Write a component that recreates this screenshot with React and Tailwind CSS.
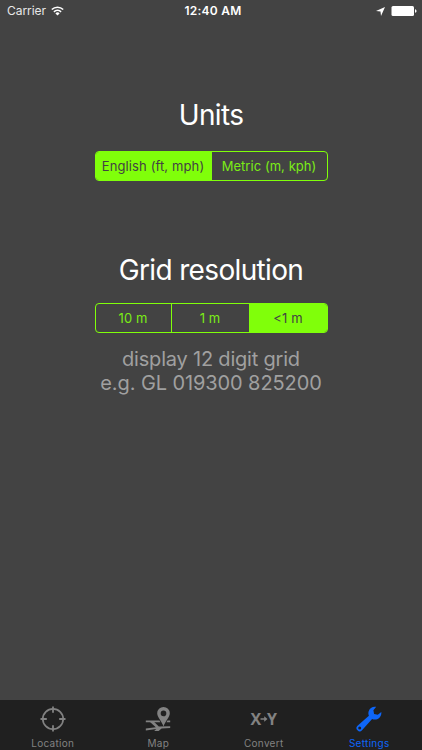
import React, { useState } from 'react';

const UNITS = [
  { id: 'english', label: 'English (ft, mph)', width: 'w-[115px]', tracking: 'tracking-[0.12px]' },
  { id: 'metric', label: 'Metric (m, kph)', width: 'w-[116px]', tracking: 'tracking-[0.05px]' },
];

const RESOLUTIONS = [
  { id: '10m', label: '10 m', width: 'w-[75px]' },
  { id: '1m', label: '1 m', width: 'w-[78px]' },
  { id: 'sub', label: '<1 m', width: 'w-[78px]' },
];

const LocationIcon = () => (
  <svg width="26" height="26" viewBox="0 0 26 26" fill="none" stroke="currentColor">
    <circle cx="13" cy="13" r="10.2" strokeWidth="1.7" />
    <path d="M13 0.5v6.3M13 19.2v6.3M0.5 13h6.3M19.2 13h6.3" strokeWidth="1.8" />
  </svg>
);

const MapIcon = () => (
  <svg width="26" height="26" viewBox="0 0 26 26" fill="currentColor">
    <path
      fillRule="evenodd"
      d="M18.5 1a6.3 6.3 0 0 0-6.3 6.3c0 4 4.5 7.7 6.3 13.2 1.8-5.500 6.300-9.200 6.300-13.200A6.300 6.300 0 0 0 18.500 1zm0 3.600a2.800 2.800 0 1 1 0 5.600 2.800 2.800 0 0 1 0-5.600z"
    />
    <path d="M0.800 14.400h13.600l1 1.800H0.800zM22.400 14.400h2.800v1.800h-3.800z" />
    <path d="M5 16h4.200l4.600 4.600 11.400-.4v1.900l-8.600.5-3 2.400H9.200l2-1.900-10.400 1.400v-1.900l10-1.300z" />
  </svg>
);

const ConvertIcon = () => (
  <span className="flex h-[26px] items-center pb-px font-['Open_Sans',sans-serif] text-[16px] font-bold leading-none">
    <span>X</span>
    <svg className="-mx-px" width="8" height="8" viewBox="0 0 8 8" fill="currentColor">
      <path d="M0.500 3.200h3.700V1.200L7.500 4 4.200 6.800V4.800H0.500z" />
    </svg>
    <span>Y</span>
  </span>
);

const SettingsIcon = () => (
  <svg width="26" height="26" viewBox="0 0 26 26" fill="currentColor">
    <path
      fillRule="evenodd"
      d="M20.2 0.800l-2.800 3.400.7 3.700 3.700.9 3.500-2.700c.4 3.500-1.900 6.700-5.200 7.300-1.500.3-2.800.1-4-.4L6 24.200a3.100 3.100 0 0 1-4.500 0 3.100 3.100 0 0 1 0-4.500L12.900 9.700c-.6-1.300-.7-2.800-.3-4.300.9-3.300 4.200-5.300 7.600-4.600zM3.700 20.500a1.500 1.500 0 1 0 0 3 1.500 1.500 0 0 0 0-3z"
    />
  </svg>
);

const TABS = [
  { id: 'location', label: 'Location', icon: LocationIcon },
  { id: 'map', label: 'Map', icon: MapIcon },
  { id: 'convert', label: 'Convert', icon: ConvertIcon },
  { id: 'settings', label: 'Settings', icon: SettingsIcon },
];

const StatusBar = () => (
  <header className="grid h-[22px] grid-cols-3 items-center pl-[7px] pr-[5px] text-[12px] leading-none text-white">
    <div className="flex items-center gap-[5px]">
      <span className="tracking-[-0.05px] text-[#e8e8e8]">Carrier</span>
      <svg width="13" height="10" viewBox="0 0 13 10" fill="none" stroke="currentColor" strokeWidth="1.6">
        <path d="M0.8 3.5a8.2 8.2 0 0 1 11.4 0M2.9 5.8a5.2 5.2 0 0 1 7.2 0" />
        <path d="M6.5 9.5L4.4 7.4a3 3 0 0 1 4.2 0z" fill="currentColor" stroke="none" />
      </svg>
    </div>
    <div className="pl-[2px] text-center font-semibold tracking-[0.25px]">12:40 AM</div>
    <div className="flex items-center justify-end">
      <svg className="mr-[6px]" width="9" height="9" viewBox="0 0 9 9" fill="currentColor">
        <path d="M9 0L5 9 4.5 4.5 0 4z" />
      </svg>
      <svg width="26" height="10" viewBox="0 0 26 10" fill="currentColor">
        <rect x="0.5" y="0" width="22.5" height="10" rx="1.5" />
        <path d="M24 3.2c1 .2 1.5.9 1.5 1.8S25 6.6 24 6.8z" />
      </svg>
    </div>
  </header>
);

const SegmentedControl = ({ options, value, onChange }) => (
  <div className="flex h-[30px] w-[233px] overflow-hidden rounded-[4px] border border-[#80ff0a]">
    {options.map((option, idx) => (
      <button
        key={option.id}
        onClick={() => onChange(option.id)}
        className={`${option.width} ${option.tracking || 'tracking-[0.1px]'} shrink-0 whitespace-nowrap text-center text-[13px] leading-none ${
          idx > 0 ? 'border-l border-[#80ff0a]' : ''
        } ${value === option.id ? 'bg-[#80ff0a] text-[#434343]' : 'text-[#7bec16]'}`}
      >
        {option.label}
      </button>
    ))}
  </div>
);

const App = () => {
  const [units, setUnits] = useState('english');
  const [resolution, setResolution] = useState('sub');
  const [tab, setTab] = useState('settings');

  return (
    <div className="flex h-[750px] w-[422px] flex-col overflow-hidden bg-[#434343] font-[Inter,sans-serif]">
      <StatusBar />

      <main className="flex flex-1 flex-col items-center">
        {/* Units */}
        <h2 className="mt-[76px] text-[28px] leading-[34px] tracking-[-0.65px] text-white">Units</h2>
        <div className="mt-[19px]">
          <SegmentedControl options={UNITS} value={units} onChange={setUnits} />
        </div>

        {/* Grid resolution */}
        <h2 className="mt-[72px] text-[28px] leading-[34px] tracking-[-0.65px] text-white">Grid resolution</h2>
        <div className="mt-[16px]">
          <SegmentedControl options={RESOLUTIONS} value={resolution} onChange={setResolution} />
        </div>
        <p className="mt-[14px] text-center text-[20px] leading-[24px] text-[#a0a0a0]">
          <span className="tracking-[-0.2px]">display 12 digit grid</span>
          <br />
          <span className="tracking-[-0.1px]">e.g. GL 019300 825200</span>
        </p>
      </main>

      {/* Tab bar */}
      <nav className="grid h-[50px] grid-cols-4 bg-[#202020]">
        {TABS.map(({ id, label, icon: Icon }) => (
          <button
            key={id}
            onClick={() => setTab(id)}
            className={`flex flex-col items-center pt-[6px] ${tab === id ? 'text-[#0e66f8]' : 'text-[#828282]'}`}
          >
            <Icon />
            <span className="mt-[5px] text-[10px] leading-[12px] tracking-[0.3px]">{label}</span>
          </button>
        ))}
      </nav>
    </div>
  );
};

export default App;
